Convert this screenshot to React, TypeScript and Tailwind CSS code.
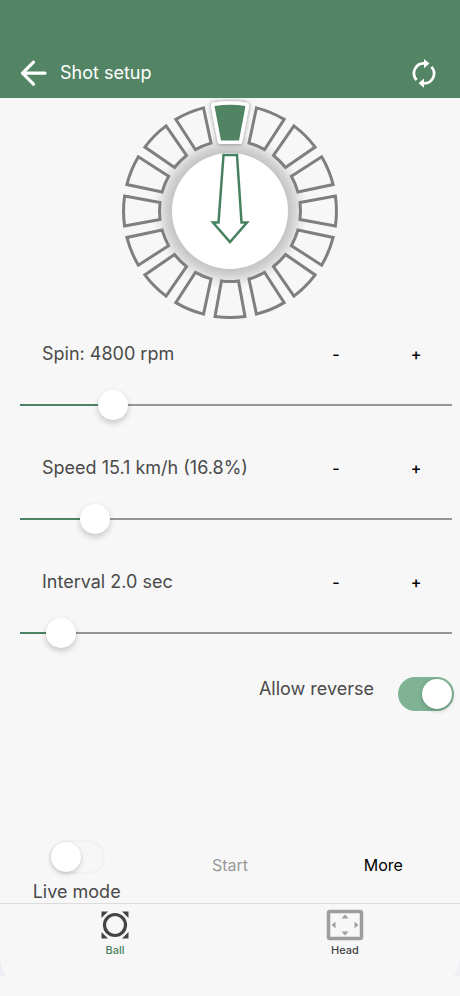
import { useState } from 'react';

const SEGMENT_COUNT = 16;
const SEGMENT_PATH = 'M-15 -105.4A106.5 106.5 0 0 1 15 -105.4L8.5 -70A70.5 70.5 0 0 0 -8.5 -70Z';
const SELECTED_PATH = 'M-15.5 -105A106.5 106.5 0 0 1 15.5 -105L9 -70.5H-9Z';

function SpinDial({ selected, onSelect }: { selected: number; onSelect: (index: number) => void }) {
  const step = 360 / SEGMENT_COUNT;
  const segments = Array.from({ length: SEGMENT_COUNT }, (_, i) => i);

  return (
    <svg viewBox="-120 -113 240 226" className="mx-auto block w-60" role="img" aria-label="Spin direction">
      <defs>
        <radialGradient id="hub-shadow" gradientUnits="userSpaceOnUse" cx="0" cy="0" r="78">
          <stop offset="0.74" stopColor="#c4c4c4" />
          <stop offset="0.82" stopColor="#d2d2d2" />
          <stop offset="0.9" stopColor="#e6e6e6" />
          <stop offset="1" stopColor="#f7f7f7" />
        </radialGradient>
        <filter id="segment-shadow" x="-30%" y="-30%" width="160%" height="160%">
          <feDropShadow dx="0" dy="0" stdDeviation="2" floodColor="#000" floodOpacity="0.45" />
        </filter>
      </defs>

      {/* Soft ring around the hub */}
      <circle r="78" fill="url(#hub-shadow)" />
      <circle r="58" fill="#fff" />

      {segments
        .filter(i => i !== selected)
        .map(i => (
          <path
            key={i}
            d={SEGMENT_PATH}
            transform={`rotate(${i * step})`}
            fill="#f7f7f7"
            stroke="#7f7f7f"
            strokeWidth="3"
            onClick={() => onSelect(i)}
          />
        ))}

      {/* Selected segment and the arrow pointing away from it */}
      <g transform={`rotate(${selected * step})`}>
        <path
          d={SELECTED_PATH}
          fill="#fff"
          stroke="#fff"
          strokeWidth="7"
          strokeLinejoin="round"
          filter="url(#segment-shadow)"
        />
        <path d={SELECTED_PATH} fill="#508462" />
        <path
          d="M-6.5 -56H7L11.5 11.5H17L0 31L-17 11.5H-11.5Z"
          fill="#fff"
          stroke="#478260"
          strokeWidth="2.5"
        />
      </g>
    </svg>
  );
}

interface SliderRowProps {
  id: string;
  label: string;
  value: number;
  onChange: (value: number) => void;
}

function SliderRow({ id, label, value, onChange }: SliderRowProps) {
  const fill = `linear-gradient(to right, #4b8263 ${value}%, #969696 ${value}%)`;

  return (
    <div className="pt-4 pb-[18px]">
      <div className="flex h-7 items-center pr-1 pl-[42px]">
        <label htmlFor={id} className="flex-1 text-lg text-[#4a4a4a]">
          {label}
        </label>
        <button
          type="button"
          className="h-7 w-20 text-base font-medium text-black"
          onClick={() => onChange(Math.max(0, value - 1))}
        >
          -
        </button>
        <button
          type="button"
          className="h-7 w-20 text-base font-medium text-black"
          onClick={() => onChange(Math.min(100, value + 1))}
        >
          +
        </button>
      </div>
      <div className="mt-[22px] pr-2 pl-5">
        <input
          id={id}
          type="range"
          min={0}
          max={100}
          step={0.5}
          value={value}
          onChange={e => onChange(Number(e.target.value))}
          style={{ backgroundImage: fill }}
          className="block h-[30px] w-full appearance-none bg-[length:100%_2px] bg-center bg-no-repeat [&::-webkit-slider-thumb]:size-[30px] [&::-webkit-slider-thumb]:appearance-none [&::-webkit-slider-thumb]:rounded-full [&::-webkit-slider-thumb]:bg-white [&::-webkit-slider-thumb]:shadow-[0_3px_6px_rgba(0,0,0,0.2)]"
        />
      </div>
    </div>
  );
}

interface SwitchProps {
  id: string;
  checked: boolean;
  onChange: (checked: boolean) => void;
}

function Switch({ id, checked, onChange }: SwitchProps) {
  return (
    <input
      id={id}
      type="checkbox"
      role="switch"
      checked={checked}
      onChange={e => onChange(e.target.checked)}
      className="block h-[34px] w-14 shrink-0 appearance-none rounded-full border-2 border-[#f1f1f1] bg-[#f7f7f7] before:block before:size-[30px] before:rounded-full before:bg-white before:shadow-[0_2px_5px_rgba(0,0,0,0.2)] checked:border-[#7fb394] checked:bg-[#7fb394] checked:before:ml-[22px]"
    />
  );
}

function BackIcon() {
  return (
    <svg viewBox="0 0 28 28" className="size-7" fill="none" stroke="currentColor" strokeWidth="3.200" strokeLinecap="round" strokeLinejoin="round">
      <path d="M13.500 3.200L2.500 14.200l11 11M3 14.200H25" />
    </svg>
  );
}

function SyncIcon() {
  return (
    <svg viewBox="0 0 30 30" className="size-[30px]" fill="none" stroke="currentColor" strokeWidth="2.700">
      <path d="M7.600 22A9.900 9.900 0 0 1 15.500 5.400M22.400 8.800A9.900 9.900 0 0 1 14.500 25.400" />
      <path d="M15 1L20.500 5.600L15 10.200ZM15 29.800L9.500 25.200L15 20.600Z" fill="currentColor" stroke="none" />
    </svg>
  );
}

function BallIcon() {
  return (
    <svg viewBox="0 0 28 28" className="size-7">
      <path d="M.5 .5h6.500L.5 7ZM27.500 .5v6.500L21 .5ZM.5 27.500v-6.500l6.500 6.500ZM27.500 27.500h-6.500l6.500-6.500Z" fill="#444" />
      <circle cx="14" cy="14" r="10.500" fill="none" stroke="#444" strokeWidth="3.200" />
    </svg>
  );
}

function HeadIcon() {
  return (
    <svg viewBox="0 0 38 32" className="h-8 w-[38px]">
      <rect x="2.500" y="2.500" width="33" height="27" rx="1.500" fill="none" stroke="#9d9d9d" strokeWidth="3.500" />
      <path d="M19 5.500l3.500 4h-7ZM19 26.500l3.500-4h-7ZM5.500 16l4-3.200v6.400ZM32.500 16l-4-3.200v6.400Z" fill="#9d9d9d" />
    </svg>
  );
}

export default function App() {
  const [direction, setDirection] = useState(0);
  const [spin, setSpin] = useState(19.5);
  const [speed, setSpeed] = useState(15);
  const [interval, setInterval] = useState(6.5);
  const [allowReverse, setAllowReverse] = useState(true);
  const [liveMode, setLiveMode] = useState(false);

  return (
    <div className="flex min-h-screen flex-col bg-[#f7f7f7] font-[Inter,'Liberation_Sans',sans-serif]">
      <header className="flex items-center bg-[#538565] pt-12 pr-[21px] pl-5 text-white">
        <button type="button" aria-label="Back" className="flex h-[50px] items-center">
          <BackIcon />
        </button>
        <h1 className="flex-1 pl-3 text-lg">Shot setup</h1>
        <button type="button" aria-label="Reset" className="flex h-[50px] items-center">
          <SyncIcon />
        </button>
      </header>

      <main className="flex flex-1 flex-col">
        <SpinDial selected={direction} onSelect={setDirection} />

        <SliderRow id="spin" label="Spin: 4800 rpm" value={spin} onChange={setSpin} />
        <SliderRow id="speed" label="Speed 15.1 km/h (16.8%)" value={speed} onChange={setSpeed} />
        <SliderRow id="interval" label="Interval 2.0 sec" value={interval} onChange={setInterval} />

        <div className="flex items-start justify-end gap-6 pt-[11px] pr-1.5">
          <label htmlFor="allow-reverse" className="text-lg leading-6 text-[#4a4a4a]">
            Allow reverse
          </label>
          <Switch id="allow-reverse" checked={allowReverse} onChange={setAllowReverse} />
        </div>

        {/* Action row pinned above the tab bar */}
        <div className="mt-auto grid grid-cols-3 items-start">
          <div className="flex flex-col items-center gap-1.5">
            <Switch id="live-mode" checked={liveMode} onChange={setLiveMode} />
            <label htmlFor="live-mode" className="text-lg leading-[23px] text-[#4a4a4a]">
              Live mode
            </label>
          </div>
          <button type="button" disabled className="h-[50px] text-base text-[#999]">
            Start
          </button>
          <button type="button" className="h-[50px] text-base text-black">
            More
          </button>
        </div>
      </main>

      <nav className="relative grid h-[93px] grid-cols-2 items-start border-t border-[#dcdcdc] text-[11px] font-medium">
        <a href="#ball" className="flex flex-col items-center pt-1 text-[#4b8263]">
          <span className="flex h-[34px] items-center">
            <BallIcon />
          </span>
          <span className="leading-4">Ball</span>
        </a>
        <a href="#head" className="flex flex-col items-center pt-1 text-[#444]">
          <span className="flex h-[34px] items-center">
            <HeadIcon />
          </span>
          <span className="leading-4">Head</span>
        </a>
        <svg viewBox="0 0 6 17" className="absolute bottom-5 left-0 h-[17px] w-1.5" fill="#eeeef4">
          <path d="M0 0C1 7 3 12 6 17H0Z" />
        </svg>
        <svg viewBox="0 0 6 17" className="absolute right-0 bottom-5 h-[17px] w-1.5" fill="#eeeef4">
          <path d="M6 0C5 7 3 12 0 17H6Z" />
        </svg>
      </nav>
    </div>
  );
}
